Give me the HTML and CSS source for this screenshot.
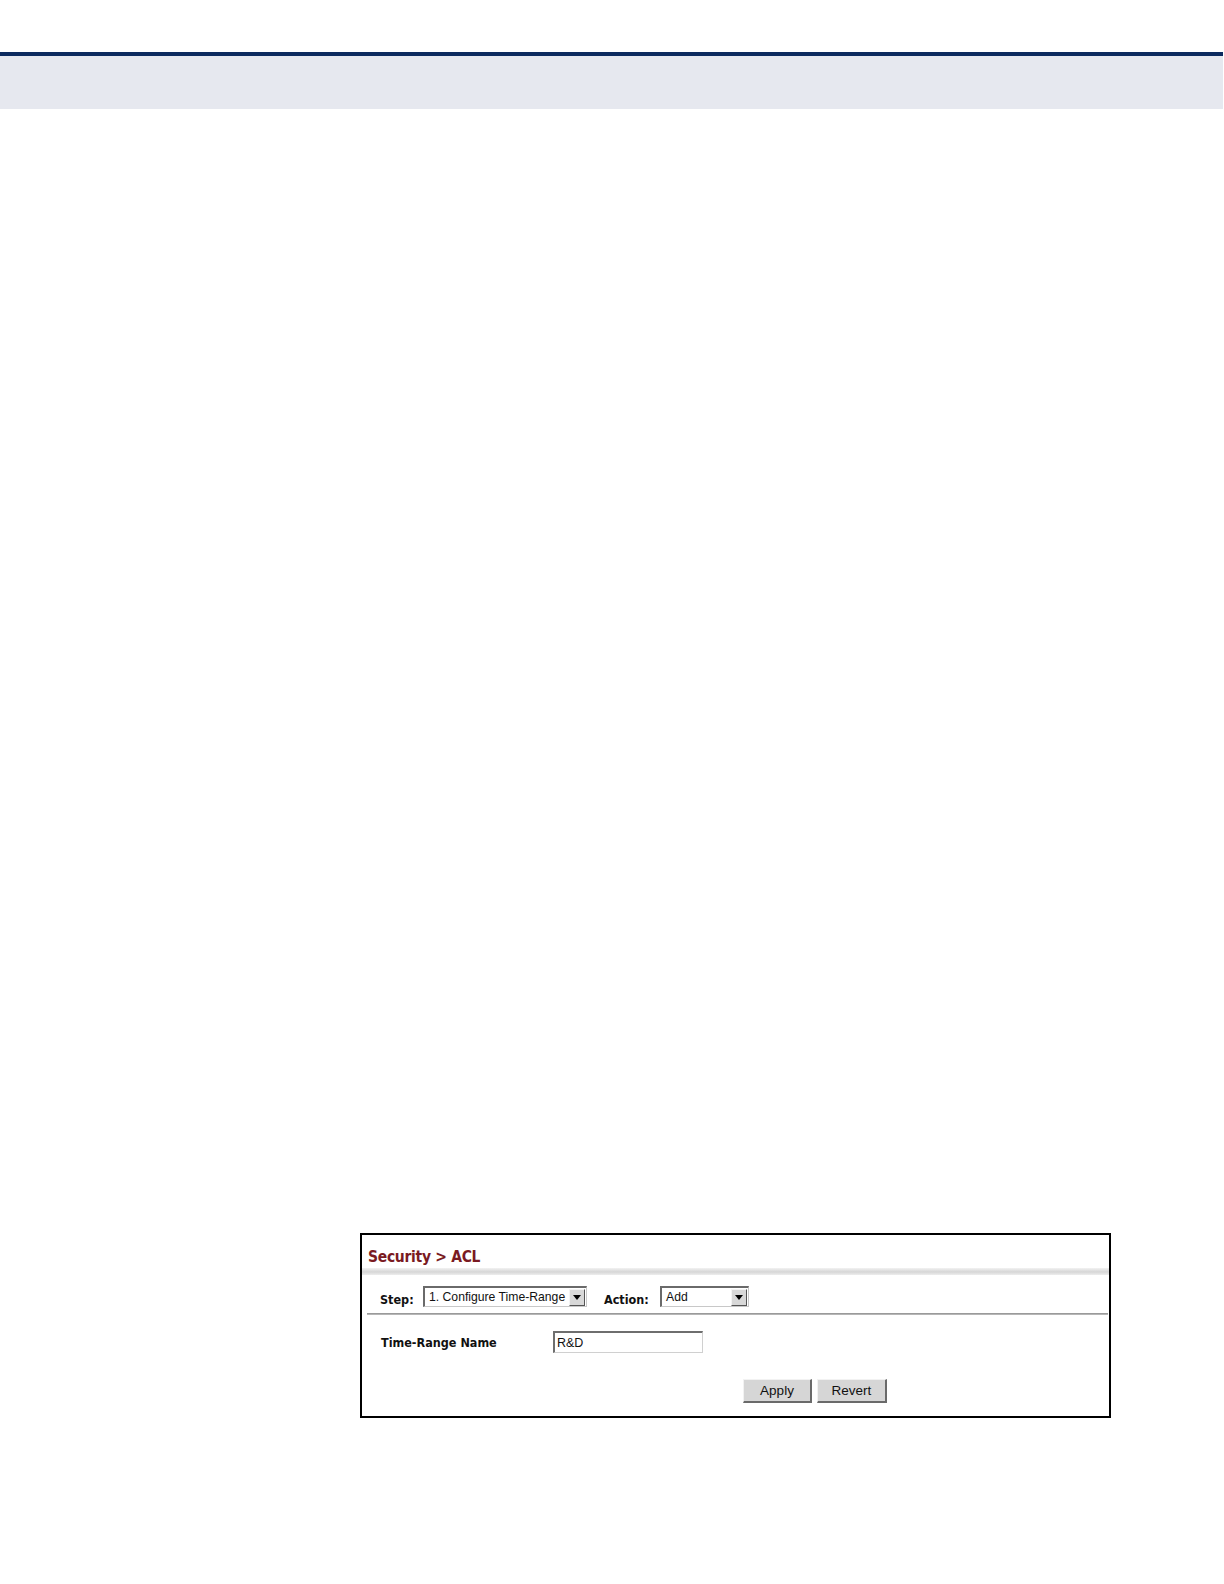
FILE: index.html
```html
<!DOCTYPE html>
<html>
<head>
<meta charset="utf-8">
<title>Security &gt; ACL</title>
<link rel="stylesheet" href="styles.css">
</head>
<body>
<div class="header"></div>
<div class="content">
  <div class="panel">
    <div class="panel-title">Security &gt; ACL</div>
    <div class="title-rule"></div>
    <div class="step-row">
      <span class="label label-step">Step:</span>
      <div class="select select-step">
        <span class="select-text">1. Configure Time-Range</span>
        <span class="select-btn"><span class="tri"></span></span>
      </div>
      <span class="label label-action">Action:</span>
      <div class="select select-action">
        <span class="select-text">Add</span>
        <span class="select-btn"><span class="tri"></span></span>
      </div>
    </div>
    <div class="row-rule"></div>
    <div class="form-row">
      <span class="label label-field">Time-Range Name</span>
      <div class="text-input">R&amp;D</div>
    </div>
    <div class="button-row">
      <button class="btn btn-apply">Apply</button>
      <button class="btn btn-revert">Revert</button>
    </div>
  </div>
</div>
</body>
</html>
```

FILE: styles.css
```css
html, body {
  margin: 0;
  padding: 0;
  background: #ffffff;
}

body {
  width: 1224px;
  height: 1584px;
  font-family: "Liberation Sans", Arial, sans-serif;
}

.header {
  margin-top: 52px;
  width: 1223px;
  height: 53px;
  border-top: 4px solid #0c2a5f;
  background: #e6e8ef;
}

.content {
  padding-top: 1124px;
  padding-left: 360px;
}

.panel {
  width: 747px;
  height: 181px;
  border: 2px solid #000000;
  background: #ffffff;
  display: flex;
  flex-direction: column;
}

.panel-title {
  height: 33px;
  padding-left: 6px;
  padding-top: 10px;
  box-sizing: border-box;
  display: flex;
  align-items: center;
  font-family: "DejaVu Sans", sans-serif;
  font-stretch: condensed;
  font-weight: bold;
  font-size: 15.5px;
  color: #7a1a22;
  letter-spacing: -0.3px;
}

.title-rule {
  height: 7px;
  background: linear-gradient(to bottom, #f2f2f2 0%, #d6d6d6 55%, #ededed 100%);
}

.step-row {
  height: 38px;
  display: flex;
  align-items: center;
  padding-left: 18px;
  padding-top: 11px;
  padding-bottom: 6px;
  box-sizing: border-box;
}

.label {
  font-family: "DejaVu Sans", sans-serif;
  font-stretch: condensed;
  font-weight: bold;
  font-size: 12.5px;
  color: #111111;
}

.step-row .label {
  padding-top: 5px;
}

.label-step {
  width: 43px;
}

.select {
  height: 21px;
  box-sizing: border-box;
  border-top: 2px solid #6a6a6a;
  border-left: 2px solid #6a6a6a;
  border-right: 1px solid #c8c8c8;
  border-bottom: 1px solid #c8c8c8;
  background: #ffffff;
  display: flex;
  align-items: center;
  justify-content: space-between;
}

.select-step {
  width: 164px;
}

.label-action {
  margin-left: 17px;
  width: 56px;
}

.select-action {
  width: 89px;
}

.select-text {
  font-family: "Liberation Sans", Arial, sans-serif;
  font-size: 12.2px;
  color: #111111;
  padding-left: 4px;
  white-space: nowrap;
}

.select-btn {
  width: 16px;
  height: 17px;
  box-sizing: border-box;
  margin-right: 1px;
  background: #d8d8d8;
  border-top: 1px solid #f4f4f4;
  border-left: 1px solid #f4f4f4;
  border-right: 1px solid #555555;
  border-bottom: 1px solid #555555;
  display: flex;
  align-items: center;
  justify-content: center;
}

.tri {
  width: 0;
  height: 0;
  border-left: 4px solid transparent;
  border-right: 4px solid transparent;
  border-top: 5px solid #000000;
}

.row-rule {
  margin: 0 1px 0 5px;
  height: 2px;
  background: linear-gradient(to bottom, #8c8c8c, #c4c4c4);
}

.form-row {
  display: flex;
  align-items: center;
  padding-left: 19px;
  padding-top: 16px;
}

.label-field {
  width: 172px;
}

.text-input {
  width: 150px;
  height: 22px;
  box-sizing: border-box;
  border-top: 2px solid #6e6e6e;
  border-left: 2px solid #6e6e6e;
  border-right: 1px solid #d0d0d0;
  border-bottom: 1px solid #d0d0d0;
  font-family: "Liberation Sans", Arial, sans-serif;
  font-size: 12.5px;
  color: #111111;
  padding-left: 2px;
  display: flex;
  align-items: center;
}

.button-row {
  display: flex;
  padding-left: 381px;
  padding-top: 26px;
  gap: 5px;
}

.btn {
  height: 24px;
  box-sizing: border-box;
  margin: 0;
  padding: 0;
  background: #d6d6d6;
  border-top: 1px solid #f2f2f2;
  border-left: 1px solid #f2f2f2;
  border-right: 2px solid #6a6a6a;
  border-bottom: 2px solid #6a6a6a;
  font-family: "Liberation Sans", Arial, sans-serif;
  font-size: 13.5px;
  color: #111111;
}

.btn-apply {
  width: 69px;
}

.btn-revert {
  width: 70px;
}
```
